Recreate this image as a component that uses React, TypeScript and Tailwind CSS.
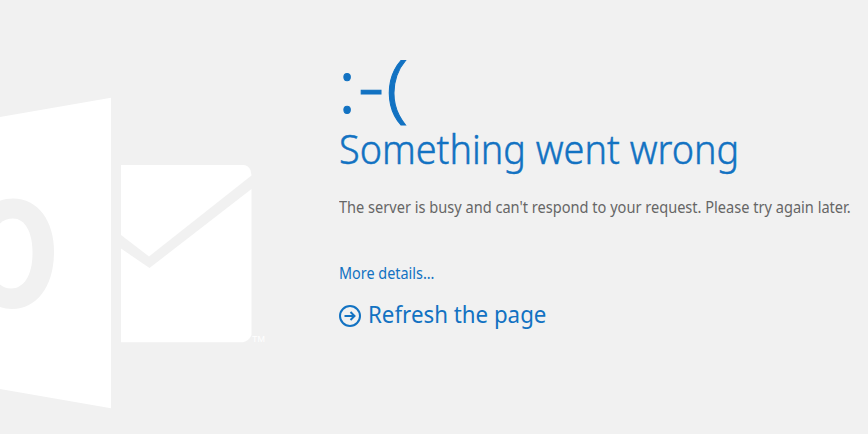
import React from "react";

const OutlookLogo = () => {
    return (
        <svg width="339" height="434" viewBox="0 0 339 434" fill="#ffffff" className="shrink-0">
            {/* Door */}
            <path d="M0 117 111 97.700V408.300L0 389Z" />
            <path d="M-28 254C-28 219-11 198.600 13 198.600C38 198.600 54 221 54 252C54 286 37 309 12 309C-12 309-28 288-28 254Z" fill="#f1f1f1" />
            <path d="M-10 254C-10 232-1 218.500 13 218.500C25 218.500 32.500 232 32.500 253C32.500 275 24 288.500 11 288.500C-2 288.500-10 275-10 254Z" />

            {/* Envelope */}
            <path d="M121 165H243Q248 165 250.500 170L251.500 175.500 149 256.500 121 235Z" />
            <path d="M121 248.500 149.500 268 251.500 189V335Q249 341 243 342.300H121Z" />

            <text x="252" y="342" fontSize="9" fontFamily="Liberation Sans, sans-serif">TM</text>
        </svg>
    )
}

const RefreshIcon = () => {
    return (
        <svg width="22" height="22" viewBox="0 0 22 22" fill="none" stroke="#1272c2" strokeWidth="2">
            <circle cx="11" cy="11" r="10" />
            <path d="M5.500 11H15.500M11.500 7 15.500 11 11.500 15" />
        </svg>
    )
}

const App = () => {
    return (
        <div className="flex w-[868px] h-[434px] overflow-hidden bg-[#f1f1f1] text-[#1272c2] font-['Noto_Sans',sans-serif]">
            <OutlookLogo />

            {/* Text */}
            <main className="flex flex-col items-start whitespace-nowrap pt-[48px]">
                <div className="flex text-[74px] leading-[74px] h-[74px] font-light [-webkit-text-stroke:1px_#1272c2]">
                    <span className="-ml-[1px] w-[20px]">:</span>
                    <span className="w-[28px] origin-left scale-x-[1.1] -translate-y-px">-</span>
                    <span className="origin-left scale-x-[1.08]">(</span>
                </div>
                <h1 className="mt-[4px] text-[40px] leading-[46px] font-light origin-left scale-x-[0.945] [-webkit-text-stroke:0.5px_#1272c2]">Something went wrong</h1>
                <p className="mt-[23px] w-[512px] text-[16px] leading-6 text-[#666666]">
                    <span className="inline-block origin-left scale-x-[0.911]">
                        The server is busy and can't respond to your request. Please try again later.
                    </span>
                </p>
                <a href="#" className="mt-[42px] text-[16px] leading-6 origin-left scale-x-[0.9]">More details...</a>
                <a href="#" className="mt-[16px] flex items-center gap-[7px] text-[24px] leading-8">
                    <RefreshIcon />
                    <span className="-mt-[3px] origin-left scale-x-[0.929]">Refresh the page</span>
                </a>
            </main>
        </div>
    )
}

export default App;
